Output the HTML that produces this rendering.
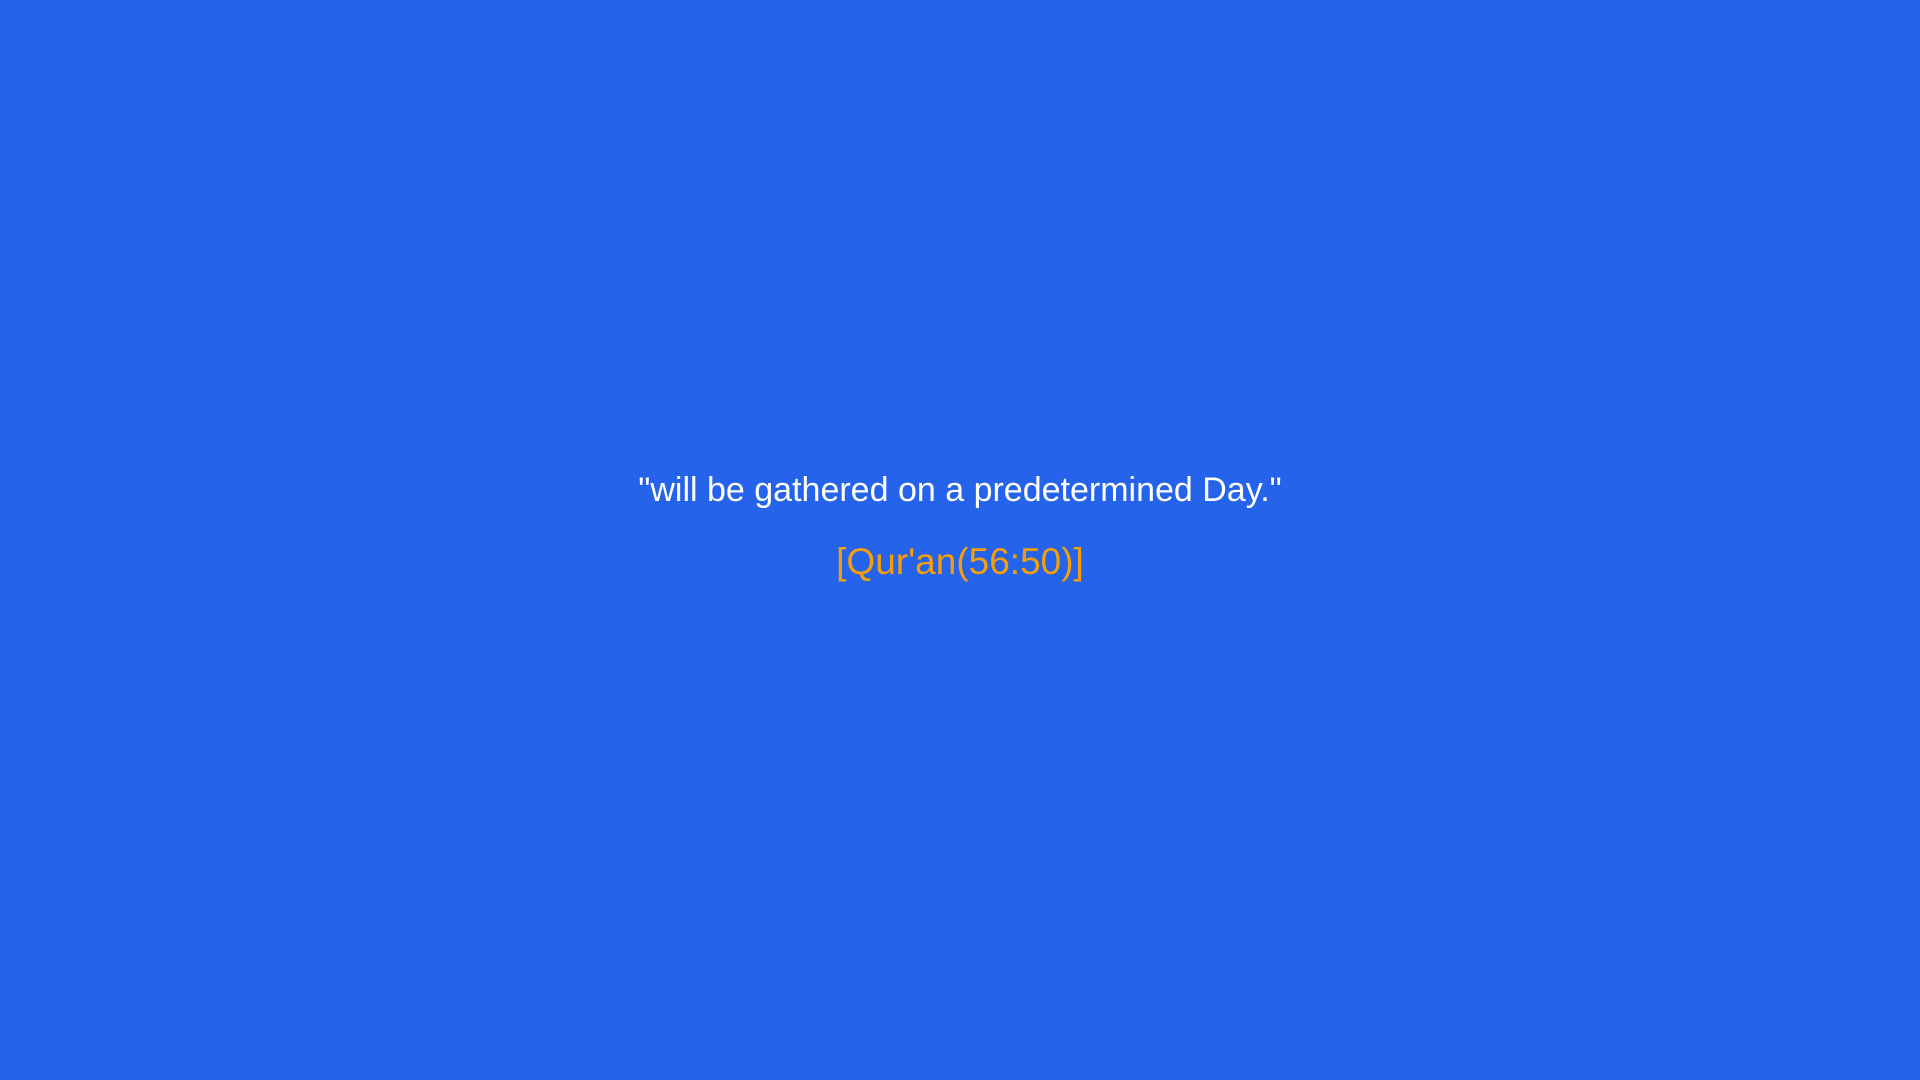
<!DOCTYPE html>
<html><head><meta charset="utf-8"><style>
html,body{margin:0;padding:0;width:1920px;height:1080px;background:#2563eb;overflow:hidden}
body{font-family:"Liberation Sans",sans-serif;text-align:center}
.q{position:absolute;left:0;right:0;top:468px;color:#fff;font-size:34px;line-height:44px}
.r{position:absolute;left:0;right:0;top:540px;color:#f59e0b;font-size:37px;line-height:44px}
</style></head><body>
<div class="q">"will be gathered on a predetermined Day."</div>
<div class="r">[Qur'an(56:50)]</div>
</body></html>
